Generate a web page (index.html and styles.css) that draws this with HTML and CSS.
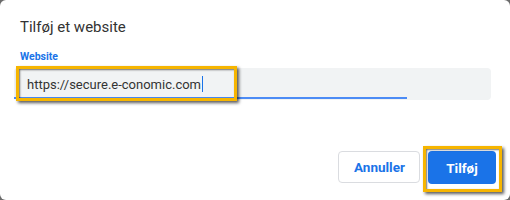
FILE: index.html
```html
<!DOCTYPE html>
<html lang="da">
<head>
  <meta charset="UTF-8">
  <title>Tilføj et website</title>
  <link rel="stylesheet" href="styles.css">
</head>
<body>
  <div class="dialog">
    <h1 class="dialog-title">Tilføj et website</h1>
    <label class="field-label" for="site">Website</label>
    <div class="field">
      <span class="field-value" id="site">https://secure.e-conomic.com<span class="caret"></span></span>
      <div class="field-line"></div>
    </div>
    <div class="actions">
      <button type="button" class="btn btn-cancel">Annuller</button>
      <button type="button" class="btn btn-primary">Tilføj</button>
    </div>

    <!-- annotation frames -->
    <div class="mark mark-input"></div>
    <div class="mark mark-button"></div>
  </div>
</body>
</html>
```

FILE: styles.css
```css
html, body {
  margin: 0;
  background: #6b6b6b;
}
body {
  font-family: Roboto, "Liberation Sans", sans-serif;
}
.dialog {
  position: relative;
  width: 510px;
  height: 200px;
  box-sizing: border-box;
  background: #fff;
  border-radius: 6px;
  padding-top: 17px;
  overflow: hidden;
}
.dialog-title {
  margin: 0 0 0 20px;
  font-size: 15px;
  font-weight: 400;
  line-height: 20px;
  color: #333;
}
.field-label {
  display: block;
  margin: 13px 0 0 20px;
  font-size: 10.5px;
  font-weight: 700;
  line-height: 14px;
  color: #1a73e8;
}
.field {
  position: relative;
  margin: 4px 19px 0 14px;
  height: 32px;
  background: #f1f3f4;
  border-radius: 4px;
  display: flex;
  align-items: center;
}
.field-value {
  padding-left: 13px;
  font-size: 13px;
  color: #333;
  display: flex;
  align-items: center;
}
.caret {
  display: inline-block;
  width: 1px;
  height: 16px;
  margin-left: 1px;
  background: #1a73e8;
}
.field-line {
  position: absolute;
  left: 0;
  bottom: 1px;
  width: 393px;
  height: 2px;
  background: #4c8bf5;
}
.actions {
  display: flex;
  justify-content: flex-end;
  gap: 8px;
  margin: 51px 14px 0 0;
}
.btn {
  height: 32px;
  padding: 0 15px;
  border-radius: 4px;
  font-family: Roboto, "Liberation Sans", sans-serif;
  font-size: 13.5px;
  font-weight: 700;
  cursor: pointer;
}
.btn-cancel {
  width: 82px;
  background: #fff;
  color: #1a73e8;
  border: 1px solid #dadce0;
}
.btn-primary {
  width: 68px;
  height: 33px;
  background: #1a73e8;
  color: #fff;
  border: none;
}
.mark {
  position: absolute;
  box-sizing: border-box;
  border: 3px solid #f6b500;
  box-shadow: 2px 2px 3px rgba(0, 0, 0, 0.65), inset 1px 1px 2px rgba(0, 0, 0, 0.55);
}
.mark-input {
  left: 16px;
  top: 66px;
  width: 221px;
  height: 35px;
}
.mark-button {
  left: 423px;
  top: 146px;
  width: 79px;
  height: 46px;
}
```
